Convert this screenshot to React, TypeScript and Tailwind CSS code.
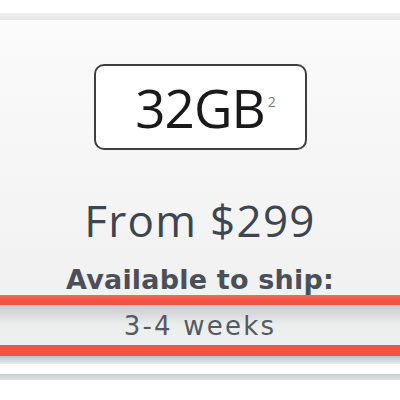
export default function App() {
  return (
    <div className="w-[400px] h-[400px] overflow-hidden bg-white flex flex-col">
      <div className="h-[13px] bg-white" />
      <div className="h-[7px] bg-gradient-to-b from-[#f0f0f0] to-[#e6e6e6]" />
      <div className="h-[275px] bg-gradient-to-b from-[#fbfbfb] to-[#f1f1f1] flex flex-col items-center">
        <div className="mt-[44px] w-[213px] h-[86px] rounded-[10px] border-2 border-[#3f3f3f] bg-white flex items-center justify-center">
          <span className="font-['Open_Sans',sans-serif] text-[53px] leading-none text-[#1a1a1a] tracking-[-1px] pl-[10px]">
            32GB
            <sup className="text-[14px] text-[#7a7a7a] align-top relative top-[21px] ml-[3px]">2</sup>
          </span>
        </div>
        <div className="mt-[47px] h-[46px] flex items-center font-['Open_Sans',sans-serif] text-[44px] tracking-[1.3px] leading-none text-[#3d4550]">
          From $299
        </div>
        <div className="mt-[23px] font-['DejaVu_Sans',sans-serif] font-bold text-[27px] tracking-[0.2px] leading-none text-[#4a4f58]">
          Available to ship:
        </div>
      </div>
      <div className="h-[10px] bg-gradient-to-b from-[#f26a5c] via-[#f4503f] to-[#e9584a]" />
      <div className="h-[40px] bg-gradient-to-b from-[#c8cccd] via-[#eceeee] to-[#eef0f0] flex items-center justify-center font-['DejaVu_Sans',sans-serif] text-[26px] text-[#555a60] tracking-[2.2px] pt-[2px]">
        3-4 weeks
      </div>
      <div className="h-[11px] bg-gradient-to-b from-[#f25646] to-[#f4503f]" />
      <div className="h-[8px] bg-gradient-to-b from-[#b9c4c6] to-[#e8eeee]" />
      <div className="h-[10px] bg-white" />
      <div className="h-[6px] bg-gradient-to-b from-[#c8cccc] to-[#dfe2e2]" />
      <div className="flex-1 bg-white" />
    </div>
  );
}
